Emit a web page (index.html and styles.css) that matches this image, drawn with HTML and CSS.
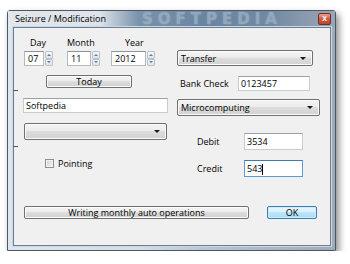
FILE: index.html
```html
<!DOCTYPE html>
<html>
<head>
<meta charset="utf-8">
<link rel="stylesheet" href="styles.css">
</head>
<body>
<div class="window">
  <div class="titlebar">
    <span class="title">Seizure / Modification</span>
    <span class="watermark">SOFTPEDIA</span>
    <span class="close">x</span>
  </div>
  <div class="client">
    <span class="tick tick-a"></span>
    <span class="tick tick-b"></span>
    <div class="main">
      <div class="col-left">
        <div class="date-labels">
          <span class="dl dl-day">Day</span>
          <span class="dl dl-month">Month</span>
          <span class="dl dl-year">Year</span>
        </div>
        <div class="date-row">
          <div class="spin spin-day"><span class="spin-val">07</span><span class="spin-btns"><span class="sb up"></span><span class="sb down"></span></span></div>
          <div class="spin spin-month"><span class="spin-val">11</span><span class="spin-btns"><span class="sb up"></span><span class="sb down"></span></span></div>
          <div class="spin spin-year"><span class="spin-val">2012</span><span class="spin-btns"><span class="sb up"></span><span class="sb down"></span></span></div>
        </div>
        <div class="btn today">Today</div>
        <div class="field name">Softpedia</div>
        <div class="combo combo-empty"><span class="combo-text"></span><span class="arrow"></span></div>
        <div class="check"><span class="box"></span><span>Pointing</span></div>
      </div>
      <div class="col-right">
        <div class="combo combo-transfer"><span class="combo-text">Transfer</span><span class="arrow"></span></div>
        <div class="row row-bank"><span class="lbl">Bank Check</span><span class="field">0123457</span></div>
        <div class="combo combo-micro"><span class="combo-text">Microcomputing</span><span class="arrow"></span></div>
        <div class="row row-amt row-debit"><span class="lbl">Debit</span><span class="field">3534</span></div>
        <div class="row row-amt row-credit"><span class="lbl">Credit</span><span class="field focus">543<span class="caret"></span></span></div>
      </div>
    </div>
    <div class="bottom">
      <div class="btn auto">Writing monthly auto operations</div>
      <div class="btn ok">OK</div>
    </div>
  </div>
</div>
</body>
</html>
```

FILE: styles.css
```css
* { box-sizing: border-box; }
body {
  margin: 0;
  background: #ffffff;
  font-family: "Open Sans", "Noto Sans", sans-serif;
  font-size: 9px;
  color: #000;
}
.window {
  margin: 10px 0 0 7px;
  width: 329px;
  height: 241px;
  border: 1px solid #4d5866;
  border-radius: 3px 3px 0 0;
  background: linear-gradient(to right, #dfe5ec 0%, #d5dde6 40%, #b9c5d2 60%, #a1abb6 100%);
  box-shadow: 3px 4px 7px rgba(0, 0, 0, 0.45);
  display: flex;
  flex-direction: column;
  padding: 0 4px 4px 5px;
}
.titlebar {
  position: relative;
  height: 16px;
  margin: 0 -4px 0 -5px;
  padding: 0 4px 0 7px;
  display: flex;
  align-items: center;
  background: linear-gradient(to right, #e3e7eb 0%, #dde3e9 28%, #7892ab 40%, #6a859f 60%, #6f89a2 80%, #8799ac 90%, #9aa6b3 100%);
}
.title {
  position: relative;
  z-index: 1;
  color: #000;
  line-height: 12px;
}
.watermark {
  position: absolute;
  left: 134px;
  top: 0;
  height: 16px;
  font-family: "DejaVu Sans", sans-serif;
  font-weight: bold;
  font-size: 15px;
  line-height: 16px;
  letter-spacing: 5px;
  color: #9cb0c4;
  text-shadow: 0 0 2px #9cb0c4;
  opacity: 0.8;
}
.close {
  position: relative;
  z-index: 1;
  margin-left: auto;
  align-self: flex-start;
  margin-top: 2px;
  width: 13px;
  height: 12px;
  border: 1px solid #6b2f2f;
  border-radius: 2px;
  background: linear-gradient(#e7a08e, #cf5a44 50%, #c0452f);
  color: #f3e3e0;
  font-family: "DejaVu Sans", sans-serif;
  font-weight: bold;
  font-size: 8px;
  line-height: 9px;
  text-align: center;
}
.client {
  position: relative;
  flex: 1;
  background: #f0f0f0;
  border: 1px solid #6f7d8c;
  box-shadow: 0 0 0 1px #c6d8ee;
  padding-left: 9px;
}
.tick {
  position: absolute;
  left: -1px;
  width: 5px;
  height: 1px;
  background: #505860;
}
.tick-a { top: 62px; }
.tick-b { top: 118px; }
.main {
  display: flex;
  height: 178px;
  gap: 9px;
}
.col-left { width: 145px; display: flex; flex-direction: column; }
.col-right { width: 143px; display: flex; flex-direction: column; }

.date-labels {
  display: flex;
  margin-top: 9px;
  height: 11px;
  line-height: 11px;
  padding-left: 1px;
}
.dl-day { width: 43px; padding-left: 6px; }
.dl-month { width: 43px; }
.dl-year { width: 43px; padding-left: 15px; }
.date-row {
  display: flex;
  margin-top: 3px;
  height: 15px;
  padding-left: 1px;
}
.spin { display: flex; height: 15px; }
.spin-day { margin-right: 14px; }
.spin-month { margin-right: 11px; }
.spin-val {
  height: 15px;
  background: #fff;
  border: 1px solid #b5bac2;
  border-top-color: #8d939c;
  line-height: 13px;
  padding-left: 3px;
}
.spin-day .spin-val { width: 20px; }
.spin-month .spin-val { width: 24px; }
.spin-year .spin-val { width: 35px; }
.spin-btns {
  margin-left: 1px;
  width: 8px;
  height: 15px;
  display: flex;
  flex-direction: column;
}
.sb {
  position: relative;
  flex: 1;
  border: 1px solid #b9c3cd;
  border-radius: 1px;
  background: linear-gradient(#f6f8fa, #dde3ea);
}
.sb.up::after, .sb.down::after {
  content: "";
  position: absolute;
  left: 1px;
  top: 2px;
  border-left: 2px solid transparent;
  border-right: 2px solid transparent;
}
.sb.up::after { border-bottom: 2px solid #5f7b99; }
.sb.down::after { border-top: 2px solid #5f7b99; top: 1px; }

.btn {
  height: 13px;
  border: 1px solid #707070;
  border-radius: 2px;
  background: linear-gradient(#f4f4f4 0%, #ececec 45%, #dddddd 50%, #d0d0d0 100%);
  text-align: center;
  line-height: 11px;
  box-shadow: inset 0 0 0 1px #fbfbfb;
}
.today { margin: 9px 0 0 23px; width: 86px; }
.field {
  background: #fff;
  border: 1px solid #c7ccd3;
  border-top-color: #9aa1aa;
  padding-left: 2px;
}
.name { margin-top: 10px; height: 15px; line-height: 13px; }
.combo {
  position: relative;
  display: flex;
  align-items: center;
  border: 1px solid #707070;
  border-radius: 2px;
  background: linear-gradient(#f4f4f4 0%, #ececec 45%, #dddddd 50%, #d2d2d2 100%);
  box-shadow: inset 0 0 0 1px #fbfbfb;
  padding-left: 3px;
}
.combo-text { flex: 1; }
.arrow {
  width: 0;
  height: 0;
  margin-right: 6px;
  border-left: 3px solid transparent;
  border-right: 3px solid transparent;
  border-top: 3px solid #1a1a1a;
}
.combo-empty { margin: 10px 0 0 1px; height: 17px; width: 143px; }
.check {
  display: flex;
  align-items: center;
  gap: 4px;
  margin: 18px 0 0 22px;
  height: 11px;
  line-height: 11px;
}
.box {
  width: 9px;
  height: 9px;
  border: 1px solid #8e8f8f;
  background: linear-gradient(135deg, #cfd1d4, #f4f4f4);
  box-shadow: inset 0 0 0 1px #f2f2f2;
}
.combo-transfer { margin-top: 22px; height: 16px; width: 136px; }
.combo-micro { margin-top: 8px; height: 17px; width: 143px; }
.row { display: grid; align-items: center; }
.row-bank {
  margin-top: 10px;
  height: 15px;
  grid-template-columns: 61px 69px;
  padding-left: 3px;
}
.row-bank .field { height: 15px; line-height: 13px; grid-column: 2; margin-left: -3px; }
.row-amt {
  height: 17px;
  grid-template-columns: 47px 59px;
  padding-left: 20px;
}
.row-debit { margin-top: 17px; }
.row-credit { margin-top: 10px; }
.row-amt .field { height: 17px; line-height: 15px; }
.field.focus { border-color: #5c9ad3; border-top-color: #3d7bad; }
.caret {
  display: inline-block;
  width: 1px;
  height: 11px;
  background: #000;
  vertical-align: middle;
}
.bottom {
  display: flex;
  height: 13px;
  padding-left: 1px;
}
.auto { width: 225px; }
.ok {
  margin-left: 18px;
  width: 50px;
  border-color: #3c7fb1;
  background: linear-gradient(#eaf6fd 0%, #d9f0fc 45%, #bee6fd 50%, #a7d9f5 100%);
  box-shadow: inset 0 0 0 1px #c9ecfd;
}
```
